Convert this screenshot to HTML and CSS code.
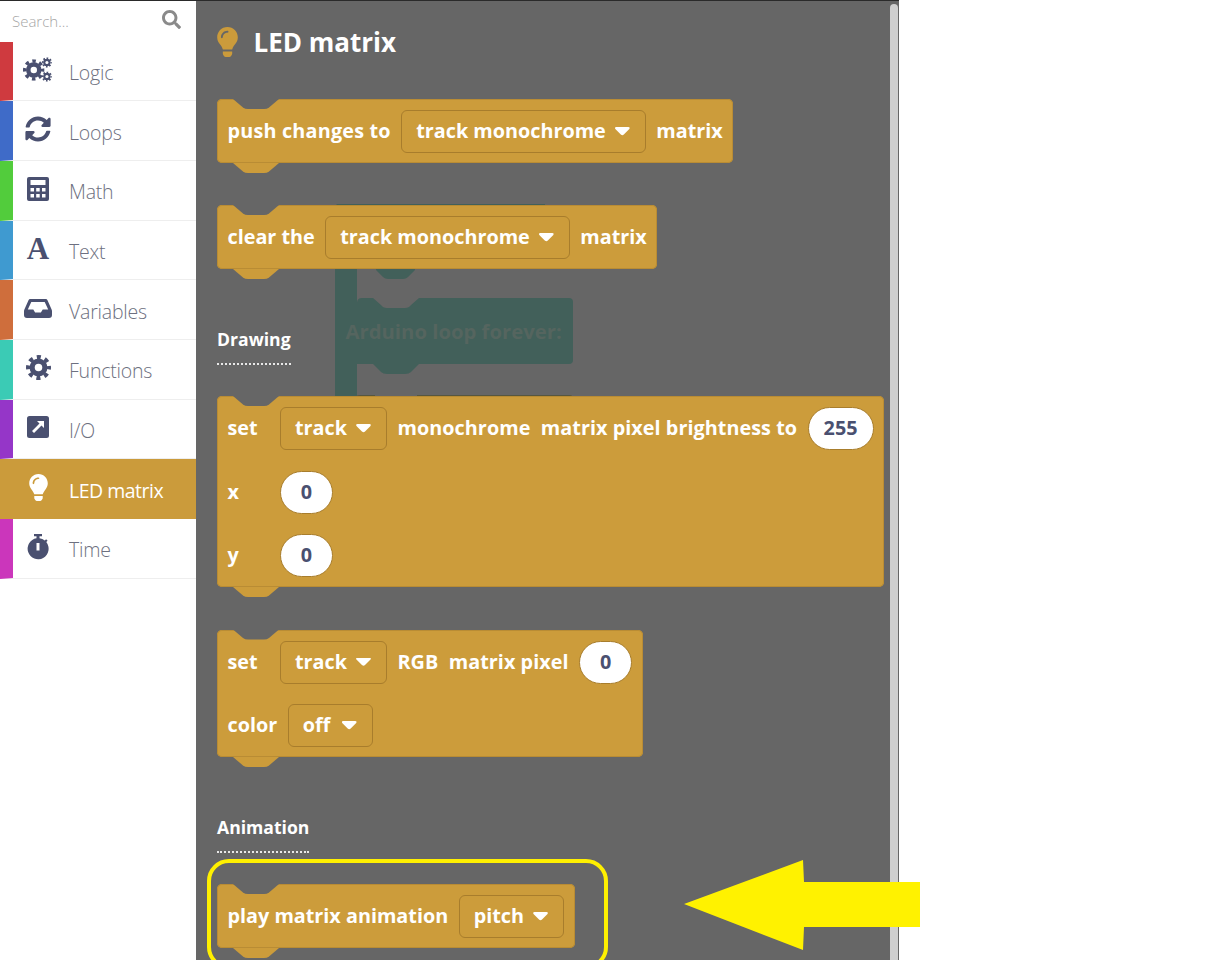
FILE: index.html
```html
<!DOCTYPE html>
<html lang="en">
<head>
<meta charset="utf-8">
<title>LED matrix</title>
<link rel="stylesheet" href="styles.css">
</head>
<body>
<svg class="defs" width="0" height="0" aria-hidden="true">
  <symbol id="gear" viewBox="0 0 24 24">
    <circle cx="12" cy="12" r="8.6" fill="#4a5070"/>
    <circle cx="12" cy="12" r="10" fill="none" stroke="#4a5070" stroke-width="4" stroke-dasharray="3.9 3.954" stroke-dashoffset="1.95"/>
    <circle cx="12" cy="12" r="3.6" fill="#fff"/>
  </symbol>
  <symbol id="bulb" viewBox="0 0 352 512">
    <path d="M96.06 454.35c.01 6.29 1.87 12.45 5.36 17.69l17.09 25.69a31.99 31.99 0 0 0 26.64 14.28h61.71a31.99 31.99 0 0 0 26.64-14.28l17.09-25.69a31.989 31.989 0 0 0 5.36-17.69l.04-38.35H96.01l.05 38.35zM0 176c0 44.37 16.45 84.85 43.56 115.78 16.52 18.85 42.36 58.23 52.21 91.45.04.26.11.52.15.78h160.16c.04-.26.11-.51.15-.78 9.85-33.22 35.69-72.6 52.21-91.45C335.55 260.85 352 220.37 352 176 352 78.61 272.91-.3 175.45 0 73.44.31 0 82.97 0 176zm176-80c-44.11 0-80 35.89-80 80 0 8.84-7.16 16-16 16s-16-7.16-16-16c0-61.76 50.24-112 112-112 8.84 0 16 7.16 16 16s-7.16 16-16 16z"/>
  </symbol>
</svg>
<div class="app">
  <aside class="sidebar">
    <div class="search">
      <span class="search-text">Search...</span>
      <svg class="search-icon" viewBox="0 0 512 512"><path d="M505 442.7L405.3 343c-4.5-4.5-10.6-7-17-7H372c27.6-35.3 44-79.7 44-128C416 93.1 322.9 0 208 0S0 93.1 0 208s93.1 208 208 208c48.3 0 92.7-16.4 128-44v16.3c0 6.4 2.5 12.5 7 17l99.7 99.7c9.4 9.4 24.6 9.4 33.9 0l28.3-28.3c9.4-9.4 9.4-24.6.1-34zM208 336c-70.7 0-128-57.2-128-128 0-70.7 57.2-128 128-128 70.7 0 128 57.2 128 128 0 70.7-57.2 128-128 128z"/></svg>
    </div>
    <div class="cat c-logic">
      <span class="ico"><svg class="i-cogs" viewBox="0 0 32 26"><use href="#gear" x="0" y="2" width="23" height="23"/><use href="#gear" x="20" y="0" width="11" height="11"/><use href="#gear" x="20" y="15" width="11" height="11"/></svg></span>
      <span class="name">Logic</span>
    </div>
    <div class="cat c-loops">
      <span class="ico"><svg class="i-24" viewBox="0 0 512 512"><path d="M370.72 133.28C339.458 104.008 298.888 87.962 255.848 88c-77.458.068-144.328 53.178-162.791 126.85-1.344 5.363-6.122 9.15-11.651 9.15H24.103c-7.498 0-13.194-6.807-11.807-14.176C33.933 94.924 134.813 8 256 8c66.448 0 126.791 26.136 171.315 68.685L463.03 40.97C478.149 25.851 504 36.559 504 57.941V192c0 13.255-10.745 24-24 24H345.941c-21.382 0-32.09-25.851-16.971-40.971l41.75-41.749zM32 296h134.059c21.382 0 32.09 25.851 16.971 40.971l-41.75 41.75c31.262 29.273 71.835 45.319 114.876 45.28 77.418-.07 144.315-53.144 162.787-126.849 1.344-5.363 6.122-9.15 11.651-9.15h57.304c7.498 0 13.194 6.807 11.807 14.176C478.067 417.076 377.187 504 256 504c-66.448 0-126.791-26.136-171.315-68.685L48.97 471.03C33.851 486.149 8 475.441 8 454.059V320c0-13.255 10.745-24 24-24z"/></svg></span>
      <span class="name">Loops</span>
    </div>
    <div class="cat c-math">
      <span class="ico"><svg class="i-22" viewBox="0 0 22 24"><path fill-rule="evenodd" d="M2 0h18a2 2 0 0 1 2 2v20a2 2 0 0 1-2 2H2a2 2 0 0 1-2-2V2a2 2 0 0 1 2-2zM3.500 3v5h15V3zM3.500 11v3.500h3.500V11zM9.200 11v3.500h3.500V11zM15 11v3.500h3.500V11zM3.500 17v3.500h3.500V17zM9.200 17v3.500h3.500V17zM15 17v3.500h3.500V17z"/></svg></span>
      <span class="name">Math</span>
    </div>
    <div class="cat c-text">
      <span class="ico ico-a">A</span>
      <span class="name">Text</span>
    </div>
    <div class="cat c-vars">
      <span class="ico"><svg class="i-inbox" viewBox="0 0 28 19"><path fill-rule="evenodd" d="M6.500 0h15c.9 0 1.600.5 2 1.300l4 9c.3.6.5 1.200.5 1.900V16a3 3 0 0 1-3 3H3a3 3 0 0 1-3-3v-3.800c0-.7.2-1.300.5-1.900l4-9C4.900.5 5.600 0 6.500 0zM7.300 3L3.800 10.500h5.500l1.800 3h5.800l1.800-3h5.500L20.700 3z"/></svg></span>
      <span class="name">Variables</span>
    </div>
    <div class="cat c-func">
      <span class="ico"><svg class="i-gear" viewBox="0 0 24 24"><use href="#gear" width="24" height="24"/></svg></span>
      <span class="name">Functions</span>
    </div>
    <div class="cat c-io">
      <span class="ico"><svg class="i-ext" viewBox="0 0 22 22"><path fill-rule="evenodd" d="M2.500 0h17A2.500 2.500 0 0 1 22 2.500v17a2.500 2.500 0 0 1-2.500 2.500h-17A2.500 2.500 0 0 1 0 19.500v-17A2.500 2.500 0 0 1 2.500 0zM10 5l2.500 2.500L5 15l2 2 7.500-7.500L17 12V5z"/></svg></span>
      <span class="name">I/O</span>
    </div>
    <div class="cat c-led active">
      <span class="ico"><svg class="i-bulb"><use href="#bulb"/></svg></span>
      <span class="name">LED matrix</span>
    </div>
    <div class="cat c-time">
      <span class="ico"><svg class="i-watch" viewBox="0 0 22 26"><path fill-rule="evenodd" d="M7 0h8v2.200h-2.500v2.100a10 10 0 0 1 5.300 2.200l1.300-1.300 1.500 1.500-1.300 1.400A10.500 10.500 0 1 1 9.500 4.300V2.200H7zM9.500 9v7.500h3V9z"/></svg></span>
      <span class="name">Time</span>
    </div>
  </aside>

  <main class="flyout">
    <svg class="workspace" viewBox="0 0 250 196">
      <path class="ws-teal" d="M2 0H210v2H22V192H0V2zM41 64H80V66L73 73Q71 75 68 75H53Q50 75 48 73L41 66z"/>
      <path class="ws-teal" d="M22 99Q22 94 27 94H38L46 101Q48 104 52 104H70Q74 104 76 101L84 94H234Q238 94 238 98V156Q238 160 234 160H84L76 168Q74 170 70 170H52Q48 170 46 168L38 160H22z"/>
      <path class="ws-dark" d="M22 192Q22 191 26 191H40V192H22zM82 192V191H234Q237 191 237 192z"/>
      <text class="ws-text" x="10.500" y="135">Arduino loop forever:</text>
    </svg>
    <div class="scrollbar"></div>

    <h1 class="title"><svg class="title-icon"><use href="#bulb"/></svg>LED matrix</h1>

    <div class="block">
      <div class="row"><span class="wide">push changes to</span><span class="dd">track monochrome</span><span>matrix</span></div>
    </div>
    <div class="block b-clear">
      <div class="row"><span>clear the</span><span class="dd">track monochrome</span><span>matrix</span></div>
    </div>

    <h2 class="heading">Drawing</h2>

    <div class="block">
      <div class="row"><span class="lead">set</span><span class="dd">track</span><span class="wide-slight">monochrome&nbsp; matrix pixel brightness to</span><span class="num">255</span></div>
      <div class="row"><span class="lead">x</span><span class="num">0</span></div>
      <div class="row"><span class="lead">y</span><span class="num">0</span></div>
    </div>
    <div class="block b-rgb">
      <div class="row"><span class="lead">set</span><span class="dd">track</span><span class="wide-slight">RGB&nbsp; matrix pixel</span><span class="num">0</span></div>
      <div class="row"><span>color</span><span class="dd dd-off">off</span></div>
    </div>

    <h2 class="heading">Animation</h2>

    <div class="block">
      <div class="row"><span>play matrix animation</span><span class="dd">pitch</span></div>
    </div>
  </main>

  <div class="frame"></div>
  <svg class="arrow" viewBox="0 0 238 92"><path d="M1 45L120 1L121 23H237V68H121L120 91z"/></svg>
</div>
</body>
</html>
```
FILE: styles.css
```css
html, body { margin: 0; height: 960px; overflow: hidden; background: #fff; }
body { font-family: "Open Sans", "Noto Sans", sans-serif; }
.defs { position: absolute; }

.app {
  position: relative;
  display: flex;
  width: 899px;
  height: 960px;
  overflow: visible;
}
.app::before {
  content: "";
  position: absolute;
  left: 0; top: 0;
  width: 899px; height: 1px;
  background: #2a2a2a;
  z-index: 5;
}

/* sidebar */
.sidebar { width: 196px; flex: none; background: #fff; }
.search {
  height: 41.6px;
  display: flex;
  align-items: center;
  justify-content: space-between;
  padding: 0 15px 0 12px;
  box-sizing: border-box;
}
.search-text { font-size: 15px; font-weight: 300; color: #a6a6a6; }
.search-icon { width: 19px; height: 19px; fill: #8a8a8a; margin-top: -2px; }

.cat {
  height: 59.67px;
  box-sizing: border-box;
  display: flex;
  align-items: center;
  border-left: 13px solid;
  border-bottom: 1px solid #eee;
  color: #6d7080;
}
.ico {
  width: 50px;
  flex: none;
  display: flex;
  justify-content: center;
  fill: #4a5070;
  color: #4a5070;
  margin-top: -3px;
}
.name { font-size: 19.5px; font-weight: 300; margin-left: 6px; letter-spacing: -0.2px; padding-top: 3px; }
.c-logic { border-left-color: #cf3a3f; }
.c-loops { border-left-color: #3f6bc8; }
.c-math { border-left-color: #52cc3c; }
.c-text { border-left-color: #3f9ad0; }
.c-vars { border-left-color: #cf6e3c; }
.c-func { border-left-color: #3bcbb5; }
.c-io { border-left-color: #9536c8; }
.c-time { border-left-color: #cb36bb; }
.c-led.active {
  border-left-color: #cb9b3b;
  background: #cb9b3b;
  border-bottom-color: #cb9b3b;
  color: #fff;
}
.active .ico { fill: #fff; }
.active .name { font-weight: 400; letter-spacing: -0.5px; }

.i-cogs { width: 30px; height: 25px; }
.i-24 { width: 26px; height: 26px; }
.i-22 { width: 22px; height: 24px; }
.i-inbox { width: 28px; height: 19px; }
.i-gear { width: 25px; height: 25px; }
.i-ext { width: 22px; height: 22px; }
.i-bulb { width: 19px; height: 27px; }
.i-watch { width: 22px; height: 26px; }
.ico-a { font-family: "Liberation Serif", serif; font-weight: 700; font-size: 31px; line-height: 1; }

/* flyout */
.flyout {
  position: relative;
  flex: 1;
  background: #666;
  padding: 21px 0 0 21px;
  box-sizing: border-box;
  display: flex;
  flex-direction: column;
  align-items: flex-start;
  overflow: hidden;
}
.workspace {
  position: absolute;
  left: 139px;
  top: 204px;
  width: 250px;
  height: 196px;
}
.ws-teal { fill: #42605a; }
.ws-dark { fill: #57573f; }
.ws-text { font: 700 20.3px "Open Sans", sans-serif; fill: #55655f; }
.scrollbar {
  position: absolute;
  right: 1px;
  top: 4px;
  bottom: 0;
  width: 8px;
  background: #cfcfcf;
  border-radius: 4px 4px 0 0;
}

.title {
  position: relative;
  margin: 0 0 36px;
  height: 42px;
  display: flex;
  align-items: center;
  font-size: 26px;
  font-weight: 700;
  color: #fff;
}
.title-icon { width: 21px; height: 30px; fill: #cb9b3b; margin-right: 15.500px; }

.heading {
  position: relative;
  margin: 58px 0 31px;
  height: 38px;
  box-sizing: border-box;
  font-size: 17.6px;
  line-height: 24px;
  font-weight: 700;
  color: #fff;
  border-bottom: 2px dotted #e8e8e8;
}
.b-clear { margin-top: 42px; }
.b-rgb { margin-top: 42.500px; }

/* blocks */
.block {
  position: relative;
  background: #cc9c3b;
  border-radius: 5px;
  box-shadow: 0 0 0 1px #b98c34 inset;
  padding: 11px 10.500px 10px;
  display: flex;
  flex-direction: column;
  gap: 20.500px;
  color: #fff;
  font-size: 19.800px;
  font-weight: 700;
}
.block::before,
.block::after {
  content: "";
  position: absolute;
  left: 16px;
  width: 46px;
  height: 10px;
  clip-path: path("M0 0H46L36 8.500Q34 10 31 10H15Q12 10 10 8.500Z");
}
.block::before { top: 0; background: #666; }
.block::after { top: 100%; background: #cc9c3b; }

.row {
  display: flex;
  align-items: center;
  gap: 10.500px;
  height: 43px;
  white-space: nowrap;
}
.row > span { padding-bottom: 2px; }
.row > .lead { min-width: 42px; }
.row > .wide { letter-spacing: 0.2px; }
.row > .wide-slight { letter-spacing: 0.05px; }

.row > .dd {
  height: 43px;
  box-sizing: border-box;
  display: flex;
  align-items: center;
  justify-content: space-between;
  gap: 9px;
  padding: 0 15px 2px 14px;
  border: 1px solid #a87d2c;
  border-radius: 6px;
}
.row > .dd-off { min-width: 85px; }
.dd::after {
  content: "";
  width: 15px;
  height: 9px;
  margin-top: 2px;
  background: #fff;
  clip-path: path("M1.500 0H13.500Q15.500 0 14.500 2L9 7.500Q7.500 9 6 7.500L.500 2Q-.500 0 1.500 0Z");
}
.row > .num {
  height: 43px;
  min-width: 53px;
  box-sizing: border-box;
  padding: 0 15px 2px;
  display: flex;
  align-items: center;
  justify-content: center;
  background: #fff;
  color: #4a5070;
  border: 1px solid #a87d2c;
  border-radius: 21.500px;
}

/* annotation overlay */
.frame {
  position: absolute;
  left: 207px;
  top: 859px;
  width: 401px;
  height: 110px;
  box-sizing: border-box;
  border: 4px solid #fff000;
  border-radius: 22px;
}
.arrow {
  position: absolute;
  left: 683px;
  top: 859px;
  width: 238px;
  height: 92px;
  fill: #fff200;
}
```
